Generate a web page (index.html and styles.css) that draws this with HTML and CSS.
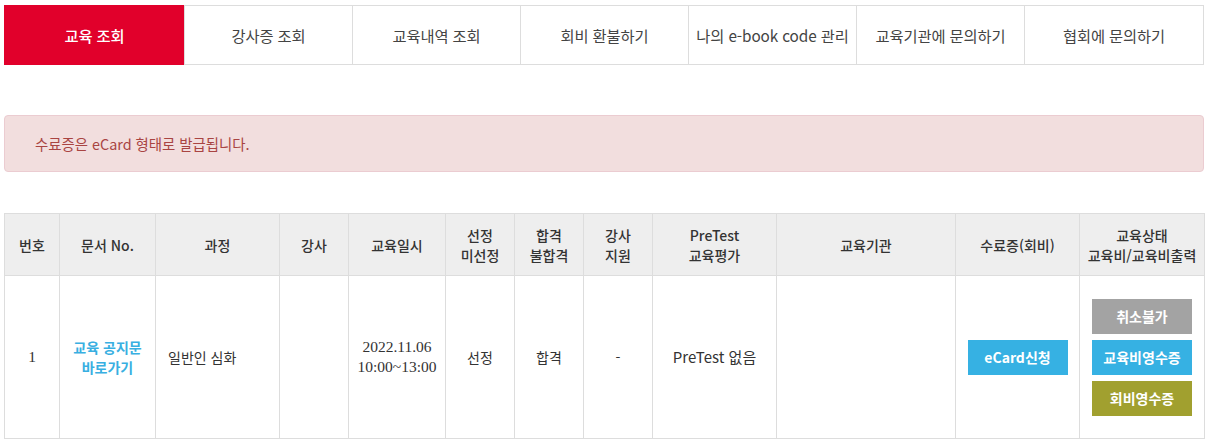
FILE: index.html
```html
<!DOCTYPE html>
<html lang="ko">
<head>
<meta charset="utf-8">
<link rel="stylesheet" href="styles.css">
</head>
<body>
<div class="page">
  <ul class="tabs">
    <li class="tab active">교육 조회</li>
    <li class="tab">강사증 조회</li>
    <li class="tab">교육내역 조회</li>
    <li class="tab">회비 환불하기</li>
    <li class="tab">나의 e-book code 관리</li>
    <li class="tab">교육기관에 문의하기</li>
    <li class="tab last">협회에 문의하기</li>
  </ul>

  <div class="alert">수료증은 eCard 형태로 발급됩니다.</div>

  <table class="list">
    <colgroup>
      <col class="c1"><col class="c2"><col class="c3"><col class="c4"><col class="c5"><col class="c6"><col class="c7"><col class="c8"><col class="c9"><col class="c10"><col class="c11"><col class="c12">
    </colgroup>
    <thead>
      <tr>
        <th>번호</th>
        <th>문서 No.</th>
        <th>과정</th>
        <th>강사</th>
        <th>교육일시</th>
        <th>선정<br>미선정</th>
        <th>합격<br>불합격</th>
        <th>강사<br>지원</th>
        <th>PreTest<br>교육평가</th>
        <th>교육기관</th>
        <th>수료증(회비)</th>
        <th>교육상태<br>교육비/교육비출력</th>
      </tr>
    </thead>
    <tbody>
      <tr>
        <td class="num">1</td>
        <td><a class="doc-link">교육 공지문<br>바로가기</a></td>
        <td class="left">일반인 심화</td>
        <td></td>
        <td class="num">2022.11.06<br>10:00~13:00</td>
        <td>선정</td>
        <td>합격</td>
        <td>-</td>
        <td class="pretest">PreTest 없음</td>
        <td></td>
        <td><span class="btn btn-blue">eCard신청</span></td>
        <td>
          <div class="btn-stack">
            <span class="btn btn-gray">취소불가</span>
            <span class="btn btn-blue">교육비영수증</span>
            <span class="btn btn-olive">회비영수증</span>
          </div>
        </td>
      </tr>
    </tbody>
  </table>
</div>
</body>
</html>
```

FILE: styles.css
```css
* { box-sizing: border-box; }

body {
  margin: 0;
  background: #fff;
  font-family: "Noto Sans CJK KR", "Noto Sans", sans-serif;
  color: #333;
}

.page {
  width: 1200px;
  margin: 5px 0 0 4px;
}

.tabs {
  list-style: none;
  margin: 0;
  padding: 0;
  display: flex;
  border: 1px solid #ddd;
  border-left: none;
  height: 60px;
}

.tab {
  width: 168px;
  display: flex;
  align-items: center;
  justify-content: center;
  font-size: 15.3px;
  color: #444;
  border-left: 1px solid #ddd;
  letter-spacing: -0.1px;
}

.tab.active {
  width: 180px;
  background: #e1002b;
  color: #fff;
  font-weight: 500;
  border-left-color: #e1002b;
  margin: -1px 0;
  height: 60px;
}

.tab.last { flex: 1; }

.alert {
  margin-top: 50px;
  height: 57px;
  background: #f2dede;
  border: 1px solid #ebccd1;
  border-radius: 4px;
  color: #a94442;
  font-size: 14.4px;
  padding: 0 30px;
  display: flex;
  align-items: center;
}

.list {
  margin-top: 41px;
  width: 1200px;
  border-collapse: collapse;
  table-layout: fixed;
  font-size: 14px;
}

.c1 { width: 55px; }
.c2 { width: 96px; }
.c3 { width: 124px; }
.c4 { width: 69px; }
.c5 { width: 97px; }
.c6 { width: 69px; }
.c7 { width: 69px; }
.c8 { width: 69px; }
.c9 { width: 124px; }
.c10 { width: 179px; }
.c11 { width: 124px; }
.c12 { width: 125px; }

.list th, .list td {
  border: 1px solid #ddd;
  text-align: center;
  vertical-align: middle;
  padding: 0;
}

.list th {
  height: 62px;
  background: #eee;
  font-weight: 500;
  color: #333;
  line-height: 20px;
  font-size: 14px;
}

.list td {
  height: 163px;
  color: #333;
  line-height: 20px;
}

.list td.num {
  font-family: "Liberation Serif", "DejaVu Serif", serif;
  font-size: 15.5px;
}

.list td.left {
  text-align: left;
  padding-left: 12px;
}

.list td.pretest { font-size: 15px; }

.doc-link {
  color: #38afe1;
  font-weight: 700;
  line-height: 20px;
}

.btn {
  display: inline-flex;
  align-items: center;
  justify-content: center;
  width: 100px;
  height: 35px;
  color: #fff;
  font-weight: 700;
  font-size: 14px;
}

.btn-blue { background: #36b1e3; }
.btn-gray { background: #a3a3a3; }
.btn-olive { background: #a1a02f; }

.btn-stack {
  display: flex;
  flex-direction: column;
  align-items: center;
  gap: 6px;
}
```
